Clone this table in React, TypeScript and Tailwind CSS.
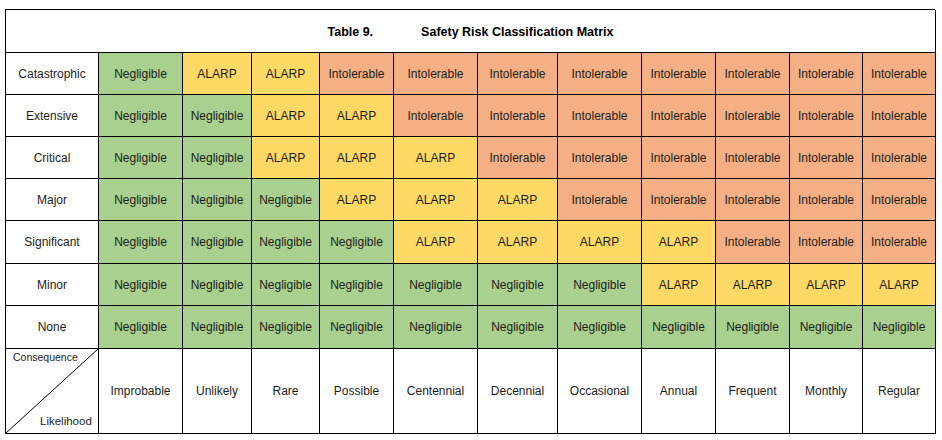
const likelihoods = [
  "Improbable",
  "Unlikely",
  "Rare",
  "Possible",
  "Centennial",
  "Decennial",
  "Occasional",
  "Annual",
  "Frequent",
  "Monthly",
  "Regular",
];

// N = Negligible, A = ALARP, I = Intolerable
const rows: { name: string; cells: string; h: string }[] = [
  { name: "Catastrophic", cells: "NAAIIIIIIII", h: "h-[42px]" },
  { name: "Extensive", cells: "NNAAIIIIIII", h: "h-[42px]" },
  { name: "Critical", cells: "NNAAAIIIIII", h: "h-[42px]" },
  { name: "Major", cells: "NNNAAAIIIII", h: "h-[42px]" },
  { name: "Significant", cells: "NNNNAAAAIII", h: "h-[43px]" },
  { name: "Minor", cells: "NNNNNNNAAAA", h: "h-[42px]" },
  { name: "None", cells: "NNNNNNNNNNN", h: "h-[43px]" },
];

const levels: Record<string, { label: string; bg: string }> = {
  N: { label: "Negligible", bg: "bg-[#a9d08e]" },
  A: { label: "ALARP", bg: "bg-[#ffd966]" },
  I: { label: "Intolerable", bg: "bg-[#f4b084]" },
};

const cell =
  "flex items-center justify-center border-r border-b border-black whitespace-nowrap";

export default function App() {
  return (
    <div
      className="min-h-screen bg-white pl-[5px] pt-[9px] text-[12px] text-[#1c1c1c]"
      style={{ fontFamily: '"Liberation Sans", Arial, sans-serif' }}
    >
      <div className="grid w-[930px] grid-cols-[93px_84px_69px_68px_74px_84px_80px_84px_74px_74px_73px_73px] border-l border-t border-black">
        <div
          className={`${cell} col-span-12 h-[43px] gap-[48px] pt-[2px] text-[12.5px] font-bold text-black`}
        >
          <span>Table 9.</span>
          <span>Safety Risk Classification Matrix</span>
        </div>

        {rows.map((row) => (
          <div key={row.name} className="contents">
            <div className={`${cell} ${row.h} bg-white`}>{row.name}</div>
            {row.cells.split("").map((c, i) => (
              <div key={i} className={`${cell} ${row.h} ${levels[c].bg}`}>
                {levels[c].label}
              </div>
            ))}
          </div>
        ))}

        <div className={`${cell} relative h-[85px] bg-white`}>
          <svg
            className="absolute inset-0 h-full w-full"
            viewBox="0 0 92 84"
            preserveAspectRatio="none"
          >
            <line x1="0" y1="84" x2="92" y2="0" stroke="black" strokeWidth="1" />
          </svg>
          <span className="absolute left-[7px] top-[1px] text-[10.5px]">
            Consequence
          </span>
          <span className="absolute left-[34px] bottom-[3px] text-[11.5px]">
            Likelihood
          </span>
        </div>
        {likelihoods.map((l) => (
          <div key={l} className={`${cell} h-[85px] bg-white`}>
            {l}
          </div>
        ))}
      </div>
    </div>
  );
}
